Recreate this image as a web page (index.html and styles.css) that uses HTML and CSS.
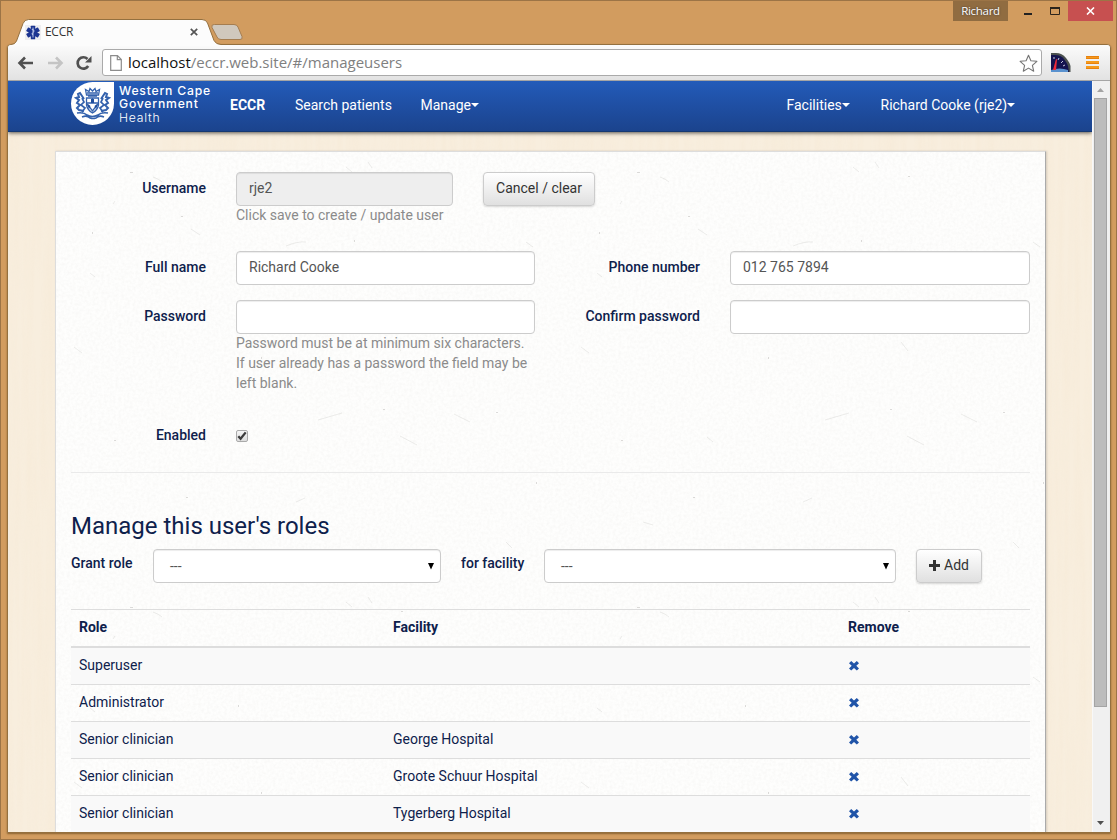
FILE: index.html
```html
<!DOCTYPE html>
<html lang="en">
<head>
<meta charset="utf-8">
<title>ECCR</title>
<link rel="stylesheet" href="styles.css">
</head>
<body>
<svg class="defs" width="0" height="0" aria-hidden="true">
  <defs>
    <path id="remove" d="M2.200 0 5 2.600 7.800 0 10 2.200 7.300 4.800 10 7.400 7.800 9.600 5 7 2.200 9.600 0 7.400 2.700 4.800 0 2.200Z"/>
    <filter id="grain" x="0" y="0" width="100%" height="100%">
      <feTurbulence type="fractalNoise" baseFrequency=".35" numOctaves="3" seed="4"/>
      <feColorMatrix values="0 0 0 0 .55  0 0 0 0 .53  0 0 0 0 .5  0 0 0 .18 -.06"/>
    </filter>
    <filter id="wood" x="0" y="0" width="100%" height="100%">
      <feTurbulence type="fractalNoise" baseFrequency=".18 .006" numOctaves="3" seed="8"/>
      <feColorMatrix values="0 0 0 0 .9  0 0 0 0 .76  0 0 0 0 .58  .9 0 0 0 -.25"/>
    </filter>
    <pattern id="fibres" width="507" height="435" patternUnits="userSpaceOnUse">
      <g fill="none" stroke="#8c8a84" stroke-width=".8" opacity=".2">
        <path d="M135 77l9 6M57 52l2-3M97 25q6 2 9 5M230 94q12-5 20-4M18 195l8 6M290 15l6 5M262 268l24-7M338 190l7 9M34 121l5 4M150 290l-6-5M312 10l4 6M420 160q6 3 8 8M80 370l10 3M398 262l16 8M470 90l7 5M240 350l9-4M450 390l6 6M344 284l17 9"/>
      </g>
      <g fill="#77756f" opacity=".25">
        <path d="M74 20h3v1h-3zM125 64h2v1h-2zM298 88h1v2h-1zM345 24h2v1h-2zM58 288h2v1h-2zM182 118h1v2h-1zM205 205h1v2h-1zM90 168h2v1h-2zM378 155h2v1h-2zM36 80h1v2h-1zM130 345h2v1h-2zM440 260h2v1h-2zM327 257h2v1h-2zM480 330h1v2h-1zM260 410h2v1h-2z"/>
      </g>
    </pattern>
  </defs>
</svg>
<div class="window">
  <div class="titlebar">
    <div class="tab">
      <svg class="tab-shape" width="240" height="27" viewBox="0 0 240 27">
        <path d="M0 25.500Q4 25.500 5.500 22L12 4.500Q13.500.5 17.500.5H191Q195 .5 196.500 4L203 21.500Q205 25.500 210 25.500V27H0Z" fill="#fcfcfc"/>
        <path d="M0 25.500Q4 25.500 5.500 22L12 4.500Q13.500.5 17.500.5H191Q195 .5 196.500 4L203 21.500Q205 25.500 210 25.500" fill="none" stroke="#94703f"/>
        <path d="M203.500 5.500H223Q226 5.500 227 8L231 17.500Q232 20.500 229 20.500H210Q207 20.500 206 18L201 8.500Q200 5.500 203 5.500Z" fill="#d0c8bd" stroke="#a57d50"/>
      </svg>
      <div class="tab-content">
        <svg width="16" height="15" viewBox="0 0 16 15"><path d="M0 0h16v15H0z" fill="#eeeef0"/><g fill="#1c3592"><rect x="5.800" y=".7" width="4.400" height="13.600" rx=".6"/><rect x="5.800" y=".7" width="4.400" height="13.600" rx=".6" transform="rotate(60 8 7.500)"/><rect x="5.800" y=".7" width="4.400" height="13.600" rx=".6" transform="rotate(-60 8 7.500)"/></g><path d="M8 2.500v10M6.800 4.500q2.500 0 2.200 1.500T7.500 8q-1.500 1.200.5 2" fill="none" stroke="#d9e2fa" stroke-width=".8"/></svg>
        <span class="tab-title">ECCR</span>
        <svg class="tab-close" width="8" height="8" viewBox="0 0 8 8"><path d="M.8.8l6.400 6.400M7.200.8L.8 7.200" stroke="#555" stroke-width="1.700"/></svg>
      </div>
    </div>
    <div class="controls">
      <span class="profile">Richard</span>
      <svg class="win-buttons" width="60" height="20" viewBox="0 0 60 20"><path d="M16 12h8v2h-8z" fill="#222"/><path d="M42.500 6.500h9v7h-9z" fill="none" stroke="#2b241c"/><path d="M42 6h10v2H42z" fill="#2b241c"/></svg>
      <span class="close"><svg width="9" height="8" viewBox="0 0 9 8"><path d="M1 .5l7 7M8 .5l-7 7" stroke="#fff" stroke-width="1.600"/></svg></span>
    </div>
  </div>

  <div class="browser">
    <div class="toolbar">
      <svg class="nav-icons" width="76" height="16" viewBox="0 0 76 16">
        <path d="M8 2.500L2.500 8 8 13.500M3 8h13" fill="none" stroke="#505050" stroke-width="2.600"/>
        <path d="M39 2.500L44.500 8 39 13.500M44 8H31" fill="none" stroke="#c4c4c4" stroke-width="2.600"/>
        <path d="M71.200 11A5.700 5.700 0 1 1 70.500 4" fill="none" stroke="#505050" stroke-width="2.700"/><path d="M74.500 1v6.500H68z" fill="#505050"/>
      </svg>
      <div class="address">
        <svg width="12" height="16" viewBox="0 0 12 16"><path d="M.7.7h6.800l3.800 3.900v10.700H.7zM7.300.7v4h4" fill="#fff" stroke="#8c8c8c" stroke-width="1.200"/></svg>
        <span class="url"><b>localhost</b>/eccr.web.site/#/manageusers</span>
        <svg class="star" width="19" height="18" viewBox="0 0 19 18"><path d="M9.500 1.200l2.400 5.600 6 .5-4.500 4 1.300 5.900-5.200-3.100-5.200 3.100 1.300-5.900-4.500-4 6-.5z" fill="none" stroke="#757575" stroke-width="1.100" stroke-linejoin="round"/></svg>
      </div>
      <svg class="gauge" width="20" height="19" viewBox="0 0 20 19"><path d="M0 0h5q6 0 10 5t4.500 8V19H0z" fill="#4b514f"/><path d="M0 2h4q6 0 9 4t4 7l1 6H0z" fill="#14144f"/><path d="M0 17q9-3 17 0v2H0z" fill="#5a92cf"/><path d="M2 17L5 6l1 .5L5 17z" fill="#f0293a"/><path d="M3 4v2M8 5l-1 2M12 8l-2 2M14 12l-2 1" stroke="#c8c8e0"/></svg>
      <svg class="menu" width="13" height="13" viewBox="0 0 13 13"><path d="M0 0h13v3H0zM0 5h13v3H0zM0 10h13v3H0z" fill="#f59a1c"/><path d="M0 2.500h13M0 7.500h13M0 12.500h13M0 .5h13" stroke="#e37b0b" stroke-width=".8"/></svg>
    </div>

    <div class="viewport">
      <main class="page">
        <svg class="texture" width="1084" height="751"><rect width="100%" height="100%" filter="url(#wood)"/></svg>
        <nav class="navbar">
          <div class="logo">
            <div class="crest"><svg width="37" height="35" viewBox="0 0 37 35">
              <g fill="none" stroke="#3462ad" stroke-width="1.300">
                <path d="M12.500 9L11.500 3.500l3.500 2 1-3 2.500 2.500L21 2.500l1 3 3.500-2L24.500 9zM13 7h11M14 10h9"/>
                <path d="M12.500 12h12v7q-1 5-6 8-5-3-6-8zM18.500 12v5M12.500 17h12M14 19l4.500 6 4.500-6"/>
                <path d="M10 13L6 7 4 8l1 3-3 1 3 2-2 3 3 2-3 3 2 2 5 1M27 13l4-6 2 1-1 3 3 1-3 2 2 3-3 2 3 3-2 2-5 1" stroke-width="2"/>
                <path d="M8 12l2 4-3 3 4 3-3 4M29 12l-2 4 3 3-4 3 3 4M3 27q7-1 10 2 5 3 11 0 3-3 10-2M8 31q5-2 8 1 3 1 6 0 3-3 8-1" stroke-width="1.700"/>
              </g>
              <path d="M17 13h3v4h-3zM12.500 17l4 3-1.500 3zM24.500 17l-4 3 1.500 3z" fill="#1f4e9d"/>
            </svg></div>
            <div class="logo-text"><span>Western Cape</span><span>Government</span><span class="light">Health</span></div>
          </div>
          <a class="brand">ECCR</a>
          <a class="link-search">Search patients</a>
          <a class="link-manage">Manage<i class="caret"></i></a>
          <a class="link-facilities">Facilities<i class="caret"></i></a>
          <a class="link-user">Richard Cooke (rje2)<i class="caret"></i></a>
        </nav>

        <section class="card">
          <svg class="texture" width="989" height="681"><rect width="100%" height="100%" filter="url(#grain)"/><rect width="100%" height="100%" fill="url(#fibres)"/></svg>
          <div class="content">
            <div class="row row-user">
              <label>Username</label>
              <div><div class="input disabled">rje2</div><p class="help">Click save to create / update user</p></div>
              <button class="btn cancel">Cancel / clear</button>
            </div>
            <div class="row row-name">
              <label>Full name</label><div class="input">Richard Cooke</div>
              <label>Phone number</label><div class="input">012 765 7894</div>
            </div>
            <div class="row row-password">
              <label>Password</label>
              <div><div class="input"></div><p class="help">Password must be at minimum six characters.<br>If user already has a password the field may be<br>left blank.</p></div>
              <label>Confirm password</label><div class="input"></div>
            </div>
            <div class="row row-enabled">
              <label>Enabled</label>
              <span class="checkbox"><svg width="10" height="10" viewBox="0 0 10 10"><path d="M1.300 5.200l2.300 2.500L8.700 1.400" fill="none" stroke="#3c3c3c" stroke-width="2.300"/></svg></span>
            </div>
            <hr>
            <h3>Manage this user's roles</h3>
            <div class="grant">
              <label class="grant-label">Grant role</label>
              <div class="input select role-select"><span>---</span><svg width="6" height="7" viewBox="0 0 6 7"><path d="M0 0h6L3 6.500z"/></svg></div>
              <label class="facility-label">for facility</label>
              <div class="input select facility-select"><span>---</span><svg width="6" height="7" viewBox="0 0 6 7"><path d="M0 0h6L3 6.500z"/></svg></div>
              <button class="btn add"><svg width="11" height="11" viewBox="0 0 11 11"><path d="M4 0h3v4h4v3H7v4H4V7H0V4h4z" fill="#333"/></svg>Add</button>
            </div>
            <table>
              <thead><tr><th class="c-role">Role</th><th class="c-facility">Facility</th><th>Remove</th></tr></thead>
              <tbody>
                <tr><td>Superuser</td><td></td><td><svg class="x" width="10" height="10"><use href="#remove"/></svg></td></tr>
                <tr><td>Administrator</td><td></td><td><svg class="x" width="10" height="10"><use href="#remove"/></svg></td></tr>
                <tr><td>Senior clinician</td><td>George Hospital</td><td><svg class="x" width="10" height="10"><use href="#remove"/></svg></td></tr>
                <tr><td>Senior clinician</td><td>Groote Schuur Hospital</td><td><svg class="x" width="10" height="10"><use href="#remove"/></svg></td></tr>
                <tr><td>Senior clinician</td><td>Tygerberg Hospital</td><td><svg class="x" width="10" height="10"><use href="#remove"/></svg></td></tr>
              </tbody>
            </table>
          </div>
        </section>
      </main>
      <div class="scrollbar">
        <svg width="7" height="4" viewBox="0 0 7 4"><path d="M0 4L3.500 0 7 4z" fill="#a3a3a3"/></svg>
        <div class="thumb"></div>
        <svg class="down" width="7" height="4" viewBox="0 0 7 4"><path d="M0 0L3.500 4 7 0z" fill="#505050"/></svg>
      </div>
    </div>
  </div>
</div>
</body>
</html>
```
FILE: styles.css
```css
* { box-sizing: border-box; }
body { margin: 0; overflow: hidden; font: 14px/20px Roboto, sans-serif; color: #0e214c; }
.defs { position: absolute; }
.window { width: 1117px; height: 840px; background: #d29c5f; border: 1px solid #9c7446; padding: 0 6px 6px; display: flex; flex-direction: column; }

.titlebar { height: 43px; flex: none; display: flex; justify-content: space-between; }
.tab { margin: 18px 0 0 4px; width: 240px; height: 27px; position: relative; z-index: 1; }
.tab-shape { position: absolute; left: 0; top: 0; }
.tab-content { position: relative; display: flex; align-items: center; height: 26px; padding-left: 14px; font: 12px/16px "Open Sans", sans-serif; color: #333; }
.tab-title { margin-left: 4px; width: 145px; letter-spacing: -.3px; }
.controls { display: flex; height: 20px; margin-right: -3px; }
.profile { width: 55px; background: #906c41; color: #fff; font: 11.5px/20px "Open Sans", sans-serif; text-align: center; letter-spacing: -.3px; text-shadow: 0 0 2px #333; }
.close { width: 45px; background: #c75050; display: flex; align-items: center; justify-content: center; }

.browser { flex: 1; min-height: 0; border: 1px solid #94703f; border-radius: 4px 4px 0 0; display: flex; flex-direction: column; background: #eee; box-shadow: 0 1px 2px #8a6230; margin-right: -1px; }
.toolbar { height: 36px; flex: none; display: flex; align-items: center; background: linear-gradient(#fbfbfb, #e2e2e2); border-bottom: 1px solid #a5a5a5; border-radius: 3px 3px 0 0; }
.nav-icons { margin-left: 9px; }
.address { margin-left: 9px; width: 940px; height: 27px; border: 1px solid #aaa; border-radius: 3px; background: #fff; display: flex; align-items: center; padding: 0 3px 0 7px; }
.url { flex: 1; margin-left: 6px; font: 15px/22px "Open Sans", sans-serif; color: #808080; padding-bottom: 1px; }
.url b { font-weight: 400; color: #111; }
.gauge { margin-left: 9px; }
.menu { margin-left: 15px; }
.viewport { flex: 1; min-height: 0; display: flex; }

.page { position: relative; width: 1084px; height: 751px; overflow: hidden; background: #f8eede; flex: none; }
.texture { position: absolute; left: 0; top: 0; pointer-events: none; }
.page > .texture { opacity: .35; }
.navbar { position: relative; height: 51px; background: linear-gradient(#235bb9, #1b438d); border-bottom: 1px solid #163972; box-shadow: 0 1px 4px rgba(0,0,0,.65); display: flex; align-items: center; color: #fff; padding-bottom: 1px; }
.logo { display: flex; width: 159px; margin: 0 0 0 63px; height: 48px; }
.crest { width: 43px; height: 43px; border-radius: 50% 0 50% 50%; background: #fff; display: grid; place-items: center; }
.logo-text { display: flex; flex-direction: column; margin: 2px 0 0 5px; font: 500 12.200px/13.500px Inter, sans-serif; letter-spacing: .78px; white-space: nowrap; }
.light { font-weight: 300; }
.navbar a { white-space: nowrap; padding-bottom: 1px; }
.brand { font-weight: 700; width: 65px; }
.link-search { width: 125.500px; }
.link-manage { width: 366px; }
.link-facilities { width: 94px; }
.caret { display: inline-block; border: 4px solid transparent; border-top-color: #fff; border-bottom: 0; vertical-align: 3px; }

.card { position: relative; margin: 19px 0 0 47px; width: 991px; height: 682px; background: #fefefd; border: 1px solid #ddd; border-right-color: #aaa; box-shadow: 1px 0 2px rgba(0,0,0,.15); }
.content { position: relative; padding: 20px 15px 0; }
.row { display: grid; grid-template-columns: 135px 299px 135px 300px; column-gap: 30px; align-items: start; }
.row-user { grid-template-columns: 135px 217px 112px; height: 79px; }
.row-name { height: 49px; }
.row-password { height: 119px; }
.row-enabled { height: 53px; }
label { font-weight: 500; text-align: right; padding-top: 6px; line-height: 20px; white-space: nowrap; }
.input { height: 34px; border: 1px solid #ccc; border-radius: 4px; background: #fff; box-shadow: inset 0 1px 1px rgba(0,0,0,.075); padding: 5px 12px; color: #555; }
.disabled { background: #eee; }
.help { margin: -1px 0 0; color: #8b8b8b; white-space: nowrap; }
.btn { font: inherit; color: #333; height: 34px; padding: 0 0 2px; border: 1px solid #ccc; border-radius: 4px; background: linear-gradient(#fff, #e0e0e0); box-shadow: 0 1px 2px rgba(0,0,0,.15); }
.checkbox { width: 12px; height: 12px; margin-top: 11px; border: 1px solid #aaa; border-radius: 2px; background: linear-gradient(#f5f5f5, #ddd); display: flex; }
hr { margin: 0; border: 0; border-top: 1px solid #eaeaea; }
h3 { margin: 40px 0 10px; font-size: 24px; line-height: 26px; font-weight: 400; }
.grant { display: flex; align-items: flex-start; height: 60px; }
.grant label { text-align: left; padding-top: 4px; }
.grant-label { width: 82px; }
.role-select { width: 288px; margin-right: 20px; }
.facility-label { width: 83px; }
.facility-select { width: 352px; margin-right: 20px; }
.select { display: flex; justify-content: space-between; align-items: center; padding: 0 6px 0 16px; }
.add { width: 66px; display: flex; align-items: center; justify-content: center; gap: 4px; }
table { width: 959px; table-layout: fixed; border-collapse: separate; border-spacing: 0; }
th, td { height: 37px; padding: 7px 8px 9px; text-align: left; border-top: 1px solid #ddd; line-height: 20px; }
th { height: 39px; border-bottom: 2px solid #ddd; font-weight: 700; }
tbody tr:first-child td { border-top: 0; height: 36px; }
.c-role { width: 314px; }
.c-facility { width: 455px; }
tbody tr:nth-child(odd) { background: #f9f9f9; }
.x { display: block; fill: #2054a8; margin: 2px 0 0 1px; }

.scrollbar { width: 17px; background: #f0f0f0; display: flex; flex-direction: column; align-items: center; padding: 7px 1px 0 0; border-left: 1px solid #f8f8f8; }
.thumb { width: 13px; height: 609px; margin-top: 6px; background: #bcbcbc; border: 1px solid #a4a4a4; }
.down { margin-top: 114px; }
```
